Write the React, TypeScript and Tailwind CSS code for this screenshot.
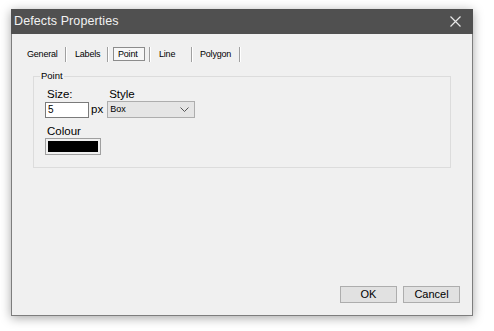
import React from "react";

const tabs = [
    { label: "General", w: "w-[38px]", pl: "pl-0" },
    { label: "Labels", w: "w-[40px]", pl: "pl-[8px]" },
    { label: "Point", w: "w-[40px]", pl: "pl-[4px]", active: true },
    { label: "Line", w: "w-[40px]", pl: "pl-[8px]" },
    { label: "Polygon", w: "w-[46px]", pl: "pl-[7px]" },
];

function TabStrip() {
    return (
        <div className="flex h-[14px] items-center mt-[13px] ml-[15px] text-[9px] tracking-[-0.2px] leading-none text-black">
            {tabs.map((t) => (
                <React.Fragment key={t.label}>
                    <div className={`${t.w} ${t.pl} h-full flex items-center`}>
                        {t.active ? (
                            <span className="h-[14px] w-[32px] flex items-center pl-[4px] border border-[#8c8c8c] bg-[#f7f7f7]">
                                {t.label}
                            </span>
                        ) : (
                            <span>{t.label}</span>
                        )}
                    </div>
                    <div className="h-[15px] w-[2px] border-l border-[#a0a0a0] border-r border-r-white" />
                </React.Fragment>
            ))}
        </div>
    );
}

export default function App() {
    return (
        <div
            className="w-[494px] h-[331px] bg-white pt-[9px] pl-[11px]"
            style={{ fontFamily: '"Liberation Sans", Arial, sans-serif' }}
        >
            <div className="w-[462px] h-[307px] flex flex-col shadow-[0_2px_10px_rgba(0,0,0,0.35)]">
                {/* title bar */}
                <div className="h-[25px] bg-[#505050] flex items-center justify-between pl-[3px] pr-[12px]">
                    <span className="text-[12.5px] text-[#f2f2f2] tracking-[0.1px]">Defects Properties</span>
                    <svg width="11" height="11" viewBox="0 0 11 11">
                        <path d="M0.5 0.5 L10.5 10.5 M10.5 0.5 L0.5 10.5" stroke="#e8e8e8" strokeWidth="1.2" />
                    </svg>
                </div>

                {/* body */}
                <div className="flex-1 flex flex-col bg-[#f0f0f0] border-x border-b border-[#7d7d7d]">
                    <TabStrip />

                    <div className="relative mt-[15px] ml-[21px] w-[418px] h-[92px] border border-[#dcdcdc] pt-[10px] pl-[11px]">
                        <span className="absolute left-[6px] top-[-7px] px-[1px] bg-[#f0f0f0] text-[9.5px] leading-[12px] text-black">
                            Point
                        </span>

                        <div className="flex">
                            <div className="flex flex-col">
                                <span className="ml-[2px] text-[11.5px] leading-[14px] text-black">Size:</span>
                                <div className="flex items-center">
                                    <div className="w-[44px] h-[16px] border border-[#7a7a7a] bg-white flex items-center pl-[2px] text-[10px] text-black">
                                        5
                                    </div>
                                    <span className="ml-[2px] text-[11.5px] text-black">px</span>
                                </div>
                            </div>
                            <div className="flex flex-col ml-[4px]">
                                <span className="ml-[2px] text-[11.5px] leading-[14px] text-black">Style</span>
                                <div className="w-[88px] h-[17px] border border-[#adadad] bg-[#e5e5e5] flex items-center justify-between pl-[2px] pr-[5px] text-[9px] text-black">
                                    <span>Box</span>
                                    <svg width="9" height="5" viewBox="0 0 9 5">
                                        <path d="M0.5 0.5 L4.5 4.5 L8.5 0.5" stroke="#555" strokeWidth="1" fill="none" />
                                    </svg>
                                </div>
                            </div>
                        </div>

                        <div className="flex flex-col mt-[6px]">
                            <span className="ml-[2px] text-[11.5px] leading-[14px] text-black">Colour</span>
                            <div className="w-[56px] h-[17px] border border-[#a0a0a0] bg-[#f0f0f0] p-[2px]">
                                <div className="w-full h-full bg-black" />
                            </div>
                        </div>
                    </div>

                    <div className="mt-auto mb-[12px] flex justify-end gap-[6px] pr-[12px]">
                        <button className="w-[57px] h-[17px] border border-[#adadad] bg-[#e1e1e1] text-[11px] leading-none text-black">
                            OK
                        </button>
                        <button className="w-[57px] h-[17px] border border-[#adadad] bg-[#e1e1e1] text-[11px] leading-none text-black">
                            Cancel
                        </button>
                    </div>
                </div>
            </div>
        </div>
    );
}
